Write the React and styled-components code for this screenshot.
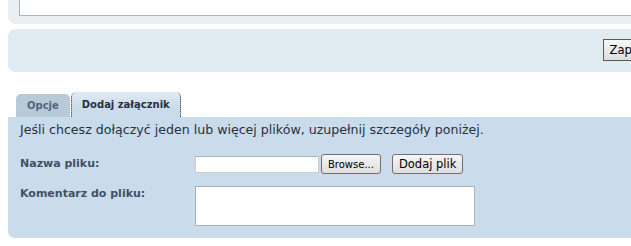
import React from 'react';
import styled, {createGlobalStyle} from 'styled-components';

const GlobalStyle = createGlobalStyle`
    html, body {
        margin: 0;
        padding: 0;
        background: #ffffff;
        overflow: hidden;
    }
    body {
        font-family: "DejaVu Sans", Verdana, sans-serif;
        color: #28313f;
    }
`;

const Page = styled.div`
    width: 720px;
    padding-left: 8px;
`;

const TopPanel = styled.div`
    height: 24px;
    background-color: #ebeff2;
    border-radius: 0 0 7px 7px;
    padding: 0 11px;
    box-sizing: border-box;
`;

const MessageBox = styled.div`
    height: 16px;
    box-sizing: border-box;
    background: #ffffff;
    border: 1px solid #a9b2ba;
    border-top: none;
`;

const SubmitPanel = styled.div`
    margin-top: 5px;
    height: 43px;
    background-color: #e1ebf2;
    border-radius: 7px;
    display: flex;
    justify-content: flex-end;
    align-items: flex-start;
    padding: 10px 74px 0 0;
    box-sizing: border-box;
`;

const Button = styled.button`
    font-family: "DejaVu Sans", Verdana, sans-serif;
    font-size: ${p => p.small ? '10px' : '11.5px'};
    color: #000000;
    height: ${p => p.tall ? '22px' : '20px'};
    padding: 0 6px;
    background: linear-gradient(#f6f6f6, #dedede);
    border: 1px solid ${p => p.dark ? '#5a5a5a' : '#707070'};
    border-radius: ${p => p.dark ? '0' : '3px'};
    cursor: pointer;
`;

const TabList = styled.ul`
    list-style: none;
    margin: 20px 0 0 8px;
    padding: 0;
    display: flex;
    align-items: flex-end;
    gap: 1px;
`;

const Tab = styled.li`
    height: ${p => p.active ? '25px' : '23px'};
    padding: 0 ${p => p.active ? '10px' : '11px'};
    box-sizing: border-box;
    display: flex;
    align-items: center;
    font-size: 10px;
    font-weight: bold;
    color: ${p => p.active ? '#28313f' : '#536482'};
    background: ${p => p.active ? 'linear-gradient(#e2ebf3, #cadceb 60%)' : '#b8c9d8'};
    border-radius: 5px 5px 0 0;
    border-left: ${p => p.active ? '1px dotted #333' : 'none'};
    border-right: ${p => p.active ? '1px dotted #333' : 'none'};
`;

const TabPanel = styled.div`
    background-color: #cadceb;
    border-radius: 0 0 7px 7px;
    height: 121px;
    padding: 5px 12px 0;
    box-sizing: border-box;
`;

const Intro = styled.p`
    margin: 0 0 16px;
    font-size: 12.6px;
    line-height: 16px;
    color: #28313f;
`;

const Fields = styled.div`
    display: grid;
    grid-template-columns: 175px 1fr;
    row-gap: 12px;
    align-items: start;
`;

const Label = styled.label`
    font-size: 11px;
    font-weight: bold;
    color: #425067;
    padding-top: ${p => p.top || 3}px;
`;

const FileRow = styled.div`
    display: flex;
    align-items: center;
    gap: 2px;
`;

const FileInput = styled.div`
    width: 124px;
    height: 17px;
    box-sizing: border-box;
    background: #ffffff;
    border: 1px solid #c4ccd4;
    border-top-color: #a8b0b8;
`;

const AddButton = styled(Button)`
    margin-left: 9px;
`;

const CommentBox = styled.textarea`
    width: 280px;
    height: 40px;
    box-sizing: border-box;
    border: 1px solid #a9b2ba;
    background: #ffffff;
    resize: none;
    margin: 0;
    padding: 2px;
`;

export default function App() {
    return (
        <Page>
            <GlobalStyle/>
            <TopPanel>
                <MessageBox/>
            </TopPanel>
            <SubmitPanel>
                <Button dark tall>Zapisz</Button>
            </SubmitPanel>
            <TabList>
                <Tab>Opcje</Tab>
                <Tab active>Dodaj załącznik</Tab>
            </TabList>
            <TabPanel>
                <Intro>Jeśli chcesz dołączyć jeden lub więcej plików, uzupełnij szczegóły poniżej.</Intro>
                <Fields>
                    <Label>Nazwa pliku:</Label>
                    <FileRow>
                        <FileInput/>
                        <Button small>Browse...</Button>
                        <AddButton>Dodaj plik</AddButton>
                    </FileRow>
                    <Label top={1}>Komentarz do pliku:</Label>
                    <CommentBox/>
                </Fields>
            </TabPanel>
        </Page>
    );
}
